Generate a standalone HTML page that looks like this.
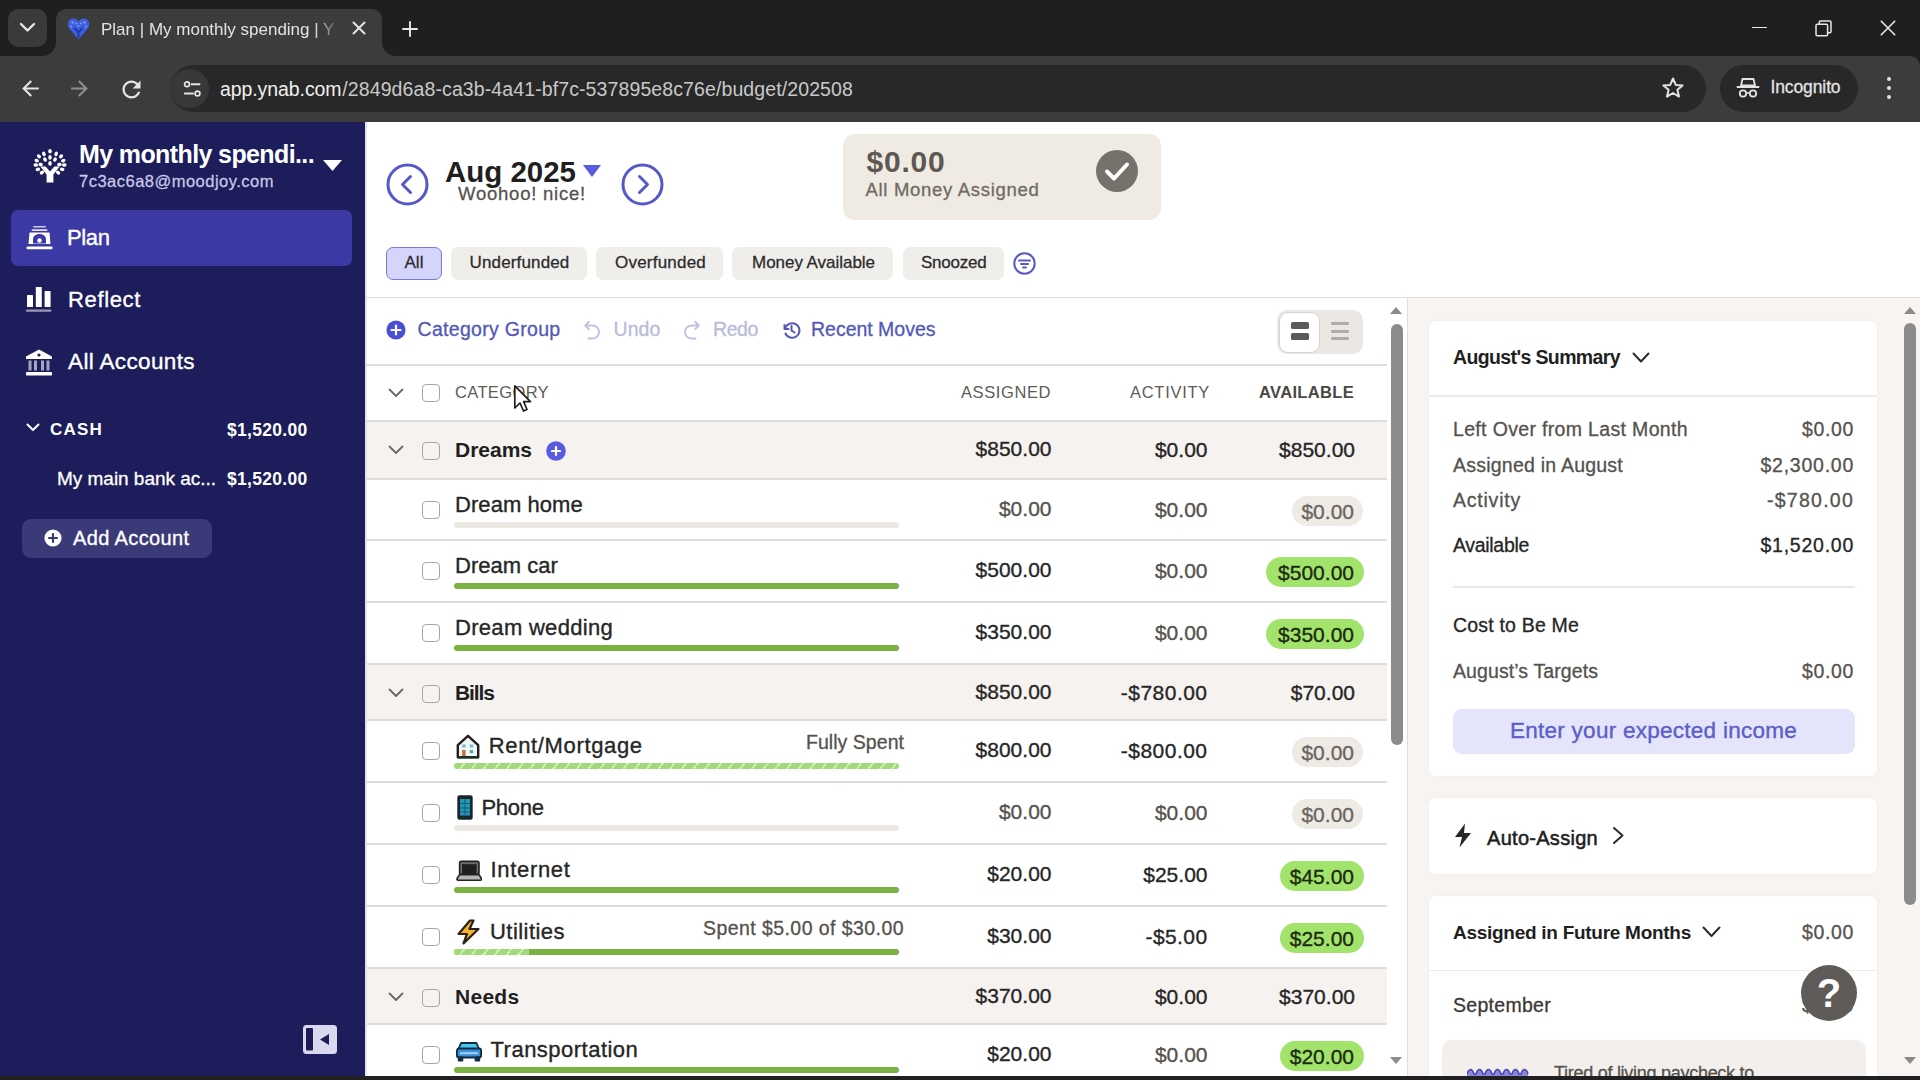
<!DOCTYPE html><html><head><meta charset="utf-8"><title>YNAB Plan</title><style>html,body{margin:0;padding:0;width:1920px;height:1080px;overflow:hidden;background:#1f1f1f;font-family:"Liberation Sans",sans-serif;}</style></head><body><div style="position:absolute;left:0px;top:0px;width:1920px;height:56px;background:#1f1f1f;"></div>
<div style="position:absolute;left:8px;top:9px;width:39px;height:38px;background:#3a3a3a;border-radius:10px"></div>
<svg style="position:absolute;left:19px;top:22px;" width="17" height="11" viewBox="0 0 17 11"><path d="M2 2 L8.5 8.5 L15 2" fill="none" stroke="#e8e8e8" stroke-width="2.4" stroke-linecap="round" stroke-linejoin="round"/></svg>
<div style="position:absolute;left:56px;top:9px;width:326px;height:48px;background:#3c3c3c;border-radius:10px 10px 0 0"></div>
<svg style="position:absolute;left:42px;top:42px;" width="14" height="14" viewBox="0 0 14 14"><path d="M0 14 A14 14 0 0 0 14 0 V14 Z" fill="#3c3c3c"/></svg>
<svg style="position:absolute;left:382px;top:42px;" width="14" height="14" viewBox="0 0 14 14"><path d="M14 14 A14 14 0 0 1 0 0 V14 Z" fill="#3c3c3c"/></svg>
<svg style="position:absolute;left:67px;top:17px;" width="23" height="23" viewBox="0 0 23 23"><path d="M11.5 22.5 L2.2 11.5 C-0.5 8 0.8 2 5.8 1.5 C8.5 1.3 10.5 3 11.5 4.5 C12.5 3 14.5 1.3 17.2 1.5 C22.2 2 23.5 8 20.8 11.5 Z" fill="#3f5ee0"/>
      <g fill="#7f97f5"><circle cx="5.5" cy="5.5" r="1.2"/><circle cx="9" cy="6.5" r="1.1"/><circle cx="14" cy="6.5" r="1.1"/><circle cx="17.5" cy="5.5" r="1.2"/><circle cx="4" cy="9.5" r="1.1"/><circle cx="19" cy="9.5" r="1.1"/><circle cx="11.5" cy="9" r="1.1"/></g>
      <path d="M7.5 11 L11.5 15 L15.5 11 M11.5 15 V21" stroke="#2338a8" stroke-width="2" fill="none"/></svg>
<div id="t1" style="position:absolute;left:101px;top:20.61px;font-size:17px;line-height:17px;font-weight:400;color:#e3e3e3;letter-spacing:0px;white-space:nowrap;font-family:'Liberation Sans', sans-serif;width:240px;overflow:hidden;-webkit-mask-image:linear-gradient(90deg,#000 89%,transparent 100%)">Plan | My monthly spending | Y</div>
<svg style="position:absolute;left:352px;top:21px;" width="14" height="14" viewBox="0 0 14 14"><path d="M1.5 1.5 L12.5 12.5 M12.5 1.5 L1.5 12.5" stroke="#e3e3e3" stroke-width="2" stroke-linecap="round"/></svg>
<svg style="position:absolute;left:402px;top:21px;" width="16" height="16" viewBox="0 0 16 16"><path d="M8 1 V15 M1 8 H15" stroke="#e8e8e8" stroke-width="1.9" stroke-linecap="round"/></svg>
<div style="position:absolute;left:1752px;top:26.5px;width:14.5px;height:1.6px;background:#e8e8e8;"></div>
<svg style="position:absolute;left:1815px;top:20px;" width="17" height="17" viewBox="0 0 17 17"><rect x="1" y="4.2" width="11.6" height="11.6" rx="1.2" fill="none" stroke="#e8e8e8" stroke-width="1.5"/><path d="M4.3 4.2 V2.2 a1.2 1.2 0 0 1 1.2 -1.2 H14.8 a1.2 1.2 0 0 1 1.2 1.2 V11.5 a1.2 1.2 0 0 1 -1.2 1.2 H12.6" fill="none" stroke="#e8e8e8" stroke-width="1.5"/></svg>
<svg style="position:absolute;left:1879px;top:19px;" width="18" height="18" viewBox="0 0 18 18"><path d="M1.8 1.8 L16.2 16.2 M16.2 1.8 L1.8 16.2" stroke="#e8e8e8" stroke-width="1.6"/></svg>
<div style="position:absolute;left:0px;top:56px;width:1920px;height:66px;background:#3c3c3c;border-radius:0 10px 0 0"></div>
<svg style="position:absolute;left:17.8px;top:76px;" width="25" height="25" viewBox="0 0 24 24"><path d="M20 11H7.83l5.59-5.59L12 4l-8 8 8 8 1.41-1.41L7.83 13H20v-2z" fill="#e3e3e3"/></svg>
<svg style="position:absolute;left:67px;top:76px;" width="25" height="25" viewBox="0 0 24 24"><path d="M12 4l-1.41 1.41L16.17 11H4v2h12.17l-5.58 5.59L12 20l8-8z" fill="#8f8f8f"/></svg>
<svg style="position:absolute;left:118px;top:76px;" width="27" height="27" viewBox="0 0 24 24"><path d="M17.65 6.35C16.2 4.9 14.21 4 12 4c-4.42 0-7.99 3.58-7.99 8s3.57 8 7.99 8c3.73 0 6.84-2.55 7.73-6h-2.08c-.82 2.33-3.04 4-5.65 4-3.31 0-6-2.69-6-6s2.69-6 6-6c1.66 0 3.14.69 4.22 1.78L13 11h7V4l-2.35 2.35z" fill="#e3e3e3"/></svg>
<div style="position:absolute;left:170px;top:65px;width:1536px;height:47px;background:#282828;border-radius:24px"></div>
<div style="position:absolute;left:170px;top:69px;width:38.5px;height:38.5px;background:#383838;border-radius:50%"></div>
<svg style="position:absolute;left:183px;top:80px;" width="19" height="18" viewBox="0 0 19 18"><circle cx="4" cy="4.2" r="2.4" fill="none" stroke="#e3e3e3" stroke-width="1.7"/><path d="M8.5 4.2 H16.5" stroke="#e3e3e3" stroke-width="1.9" stroke-linecap="round"/><circle cx="14.5" cy="13.5" r="2.4" fill="none" stroke="#e3e3e3" stroke-width="1.7"/><path d="M1.8 13.5 H10" stroke="#e3e3e3" stroke-width="1.9" stroke-linecap="round"/></svg>
<div id="t2" style="position:absolute;left:220px;top:79.79px;font-size:19.5px;line-height:19.5px;font-weight:400;color:#f0f0f0;letter-spacing:-0.083px;white-space:nowrap;font-family:'Liberation Sans', sans-serif;">app.ynab.com</div>
<div id="t3" style="position:absolute;left:342.3px;top:79.79px;font-size:19.5px;line-height:19.5px;font-weight:400;color:#c8c8c8;letter-spacing:0.106px;white-space:nowrap;font-family:'Liberation Sans', sans-serif;">/2849d6a8-ca3b-4a41-bf7c-537895e8c76e/budget/202508</div>
<svg style="position:absolute;left:1661px;top:76px;" width="24" height="24" viewBox="0 0 24 24"><path d="M12 2.5 L14.8 8.9 L21.6 9.4 L16.4 13.8 L18 20.6 L12 17 L6 20.6 L7.6 13.8 L2.4 9.4 L9.2 8.9 Z" fill="none" stroke="#e3e3e3" stroke-width="2" stroke-linejoin="round"/></svg>
<div style="position:absolute;left:1720px;top:65px;width:138px;height:47px;background:#282828;border-radius:24px"></div>
<svg style="position:absolute;left:1736px;top:77px;" width="24" height="22" viewBox="0 0 24 22"><path d="M6.5 2 H17.5 L19 8.5 H5 Z" fill="none" stroke="#e3e3e3" stroke-width="1.8" stroke-linejoin="round"/><path d="M1.5 10 H22.5" stroke="#e3e3e3" stroke-width="2" stroke-linecap="round"/><circle cx="7" cy="16.5" r="3.2" fill="none" stroke="#e3e3e3" stroke-width="1.8"/><circle cx="17" cy="16.5" r="3.2" fill="none" stroke="#e3e3e3" stroke-width="1.8"/><path d="M10.2 16 H13.8" stroke="#e3e3e3" stroke-width="1.6"/></svg>
<div id="t4" style="position:absolute;left:1770.5px;top:79.19px;font-size:17.5px;line-height:17.5px;font-weight:400;color:#e3e3e3;letter-spacing:-0.115px;white-space:nowrap;font-family:'Liberation Sans', sans-serif;-webkit-text-stroke:0.28px #e3e3e3;">Incognito</div>
<div style="position:absolute;left:1887px;top:76.8px;width:4.4px;height:4.4px;background:#e3e3e3;border-radius:50%"></div>
<div style="position:absolute;left:1887px;top:85.8px;width:4.4px;height:4.4px;background:#e3e3e3;border-radius:50%"></div>
<div style="position:absolute;left:1887px;top:94.8px;width:4.4px;height:4.4px;background:#e3e3e3;border-radius:50%"></div>
<div style="position:absolute;left:0px;top:122px;width:365px;height:958px;background:#1c1d5a;"></div>
<svg style="position:absolute;left:32px;top:148px;" width="36" height="36" viewBox="0 0 36 36"><g fill="#fff"><ellipse cx="18" cy="3.3" rx="1.75" ry="2.3" transform="rotate(0 18 3.3)"/><ellipse cx="11.9" cy="5.9" rx="1.75" ry="2.3" transform="rotate(-25 11.9 5.9)"/><ellipse cx="24.1" cy="5.9" rx="1.75" ry="2.3" transform="rotate(25 24.1 5.9)"/><ellipse cx="6.9" cy="8.3" rx="1.75" ry="2.3" transform="rotate(-46 6.9 8.3)"/><ellipse cx="29.1" cy="8.3" rx="1.75" ry="2.3" transform="rotate(46 29.1 8.3)"/><ellipse cx="4.7" cy="12.6" rx="1.75" ry="2.3" transform="rotate(-64 4.7 12.6)"/><ellipse cx="31.3" cy="12.6" rx="1.75" ry="2.3" transform="rotate(64 31.3 12.6)"/><ellipse cx="3.8" cy="17" rx="1.75" ry="2.3" transform="rotate(-82 3.8 17)"/><ellipse cx="32.2" cy="17" rx="1.75" ry="2.3" transform="rotate(82 32.2 17)"/><ellipse cx="5.8" cy="21.4" rx="1.75" ry="2.3" transform="rotate(259 5.8 21.4)"/><ellipse cx="30.2" cy="21.4" rx="1.75" ry="2.3" transform="rotate(101 30.2 21.4)"/><ellipse cx="9.9" cy="24.6" rx="1.75" ry="2.3" transform="rotate(235 9.9 24.6)"/><ellipse cx="26.1" cy="24.6" rx="1.75" ry="2.3" transform="rotate(125 26.1 24.6)"/><ellipse cx="13" cy="11.6" rx="1.75" ry="2.3" transform="rotate(-34 13 11.6)"/><ellipse cx="23" cy="11.6" rx="1.75" ry="2.3" transform="rotate(34 23 11.6)"/><ellipse cx="18" cy="9.4" rx="1.75" ry="2.3" transform="rotate(0 18 9.4)"/><ellipse cx="18" cy="15.4" rx="1.75" ry="2.3" transform="rotate(0 18 15.4)"/><ellipse cx="8.6" cy="16.5" rx="1.75" ry="2.3" transform="rotate(-75 8.6 16.5)"/><ellipse cx="27.4" cy="16.5" rx="1.75" ry="2.3" transform="rotate(75 27.4 16.5)"/><path d="M8.3 18.5 H13.6 L18 23.6 L22.4 18.5 H27.7 L21.4 26.5 V34.5 H14.6 V26.5 Z"/></g></svg>
<div id="t5" style="position:absolute;left:79px;top:142.34px;font-size:25px;line-height:25px;font-weight:700;color:#ffffff;letter-spacing:-0.613px;white-space:nowrap;font-family:'Liberation Sans', sans-serif;">My monthly spendi...</div>
<svg style="position:absolute;left:323px;top:160px;" width="19" height="12" viewBox="0 0 19 12"><path d="M0 0 H19 L9.5 11 Z" fill="#fff"/></svg>
<div id="t6" style="position:absolute;left:79px;top:172.53px;font-size:16.5px;line-height:16.5px;font-weight:400;color:#c9c8e6;letter-spacing:0.489px;white-space:nowrap;font-family:'Liberation Sans', sans-serif;-webkit-text-stroke:0.26px #c9c8e6;">7c3ac6a8@moodjoy.com</div>
<div style="position:absolute;left:11px;top:210px;width:341px;height:55.5px;background:#3b39a3;border-radius:7px"></div>
<svg style="position:absolute;left:26px;top:225px;" width="27" height="26" viewBox="0 0 27 26"><g fill="#fff">
      <rect x="7" y="1" width="13" height="1.6" rx=".8" opacity=".75"/>
      <rect x="5.5" y="4.2" width="16" height="1.8" rx=".9" opacity=".85"/>
      <path d="M3.5 7.5 H23.5 L24.5 19 H2.5 Z"/>
      <rect x="0.5" y="21.5" width="26" height="2.8" rx="1"/></g>
      <path d="M7 18.5 V14 a6.5 5 0 0 1 13 0 V18.5 Z" fill="#3b38a6"/>
      <circle cx="13.5" cy="15.5" r="2.2" fill="#fff"/></svg>
<div id="t7" style="position:absolute;left:67px;top:226.68px;font-size:22px;line-height:22px;font-weight:400;color:#ffffff;letter-spacing:-0.387px;white-space:nowrap;font-family:'Liberation Sans', sans-serif;-webkit-text-stroke:0.35px #ffffff;">Plan</div>
<svg style="position:absolute;left:26px;top:286px;" width="26" height="26" viewBox="0 0 26 26"><g fill="#fff"><rect x="1" y="9" width="6" height="12" rx=".6"/><rect x="9.8" y="1" width="6" height="20" rx=".6"/><rect x="18.6" y="5" width="6" height="16" rx=".6"/>
      <rect x="0" y="23.6" width="25.5" height="2.2" rx="1" opacity=".55"/></g></svg>
<div id="t8" style="position:absolute;left:68px;top:288.68px;font-size:22px;line-height:22px;font-weight:400;color:#ffffff;letter-spacing:0.645px;white-space:nowrap;font-family:'Liberation Sans', sans-serif;-webkit-text-stroke:0.35px #ffffff;">Reflect</div>
<svg style="position:absolute;left:25px;top:349px;" width="28" height="27" viewBox="0 0 28 27"><g fill="#fff"><path d="M14 0.5 L27 7.5 V10 H1 V7.5 Z"/><g opacity=".6"><rect x="3.5" y="11.5" width="3" height="10"/><rect x="9" y="11.5" width="3" height="10"/><rect x="16" y="11.5" width="3" height="10"/><rect x="21.5" y="11.5" width="3" height="10"/></g>
      <rect x="1" y="23" width="26" height="3.5" rx=".8"/></g><circle cx="14" cy="6" r="1.6" fill="#1d1c59"/></svg>
<div id="t9" style="position:absolute;left:68px;top:350.95px;font-size:22.5px;line-height:22.5px;font-weight:400;color:#ffffff;letter-spacing:0.368px;white-space:nowrap;font-family:'Liberation Sans', sans-serif;-webkit-text-stroke:0.36px #ffffff;">All Accounts</div>
<svg style="position:absolute;left:26px;top:423px;" width="14" height="9" viewBox="0 0 14 9"><path d="M1.5 1.5 L7 7 L12.5 1.5" fill="none" stroke="#fff" stroke-width="2" stroke-linecap="round" stroke-linejoin="round"/></svg>
<div id="t10" style="position:absolute;left:50px;top:420.61px;font-size:17px;line-height:17px;font-weight:700;color:#ffffff;letter-spacing:1.207px;white-space:nowrap;font-family:'Liberation Sans', sans-serif;">CASH</div>
<div id="t11" style="position:absolute;right:1612.5px;top:421.69px;font-size:17.5px;line-height:17.5px;font-weight:700;color:#ffffff;letter-spacing:0.293px;white-space:nowrap;font-family:'Liberation Sans', sans-serif;">$1,520.00</div>
<div id="t12" style="position:absolute;left:57px;top:468.92px;font-size:19px;line-height:19px;font-weight:400;color:#ffffff;letter-spacing:-0.025px;white-space:nowrap;font-family:'Liberation Sans', sans-serif;-webkit-text-stroke:0.30px #ffffff;">My main bank ac...</div>
<div id="t13" style="position:absolute;right:1612.5px;top:470.69px;font-size:17.5px;line-height:17.5px;font-weight:700;color:#ffffff;letter-spacing:0.293px;white-space:nowrap;font-family:'Liberation Sans', sans-serif;">$1,520.00</div>
<div style="position:absolute;left:22px;top:519px;width:190px;height:39px;background:#3b3a78;border-radius:9px"></div>
<svg style="position:absolute;left:44px;top:529px;" width="18" height="18" viewBox="0 0 18 18"><circle cx="9" cy="9" r="8.6" fill="#fff"/><path d="M9 5 V13 M5 9 H13" stroke="#3b3a78" stroke-width="2.2" stroke-linecap="round"/></svg>
<div id="t14" style="position:absolute;left:73px;top:528.07px;font-size:20px;line-height:20px;font-weight:400;color:#ffffff;letter-spacing:0.381px;white-space:nowrap;font-family:'Liberation Sans', sans-serif;-webkit-text-stroke:0.32px #ffffff;">Add Account</div>
<svg style="position:absolute;left:303px;top:1025px;" width="34" height="29" viewBox="0 0 34 29"><rect x="0" y="0" width="34" height="29" rx="3.5" fill="#d9d8ee"/><rect x="3" y="3" width="7" height="22.5" rx="1" fill="#1d1c59"/><path d="M26 9 L17 14.5 L26 20 Z" fill="#1d1c59"/></svg>
<div style="position:absolute;left:365px;top:122px;width:1555px;height:954px;background:#ffffff;"></div>
<div style="position:absolute;left:365px;top:122px;width:1.5px;height:954px;background:#e4e2f3;"></div>
<svg style="position:absolute;left:386px;top:163px;" width="43" height="43" viewBox="0 0 43 43"><circle cx="21.5" cy="21.5" r="19.5" fill="none" stroke="#5558c9" stroke-width="3"/><path d="M24.5 13.5 L16.5 21.5 L24.5 29.5" fill="none" stroke="#5558c9" stroke-width="3" stroke-linecap="round" stroke-linejoin="round"/></svg>
<svg style="position:absolute;left:621px;top:163px;" width="43" height="43" viewBox="0 0 43 43"><circle cx="21.5" cy="21.5" r="19.5" fill="none" stroke="#5558c9" stroke-width="3"/><path d="M18.5 13.5 L26.5 21.5 L18.5 29.5" fill="none" stroke="#5558c9" stroke-width="3" stroke-linecap="round" stroke-linejoin="round"/></svg>
<div id="t15" style="position:absolute;left:445px;top:156.53px;font-size:29.5px;line-height:29.5px;font-weight:700;color:#1f1f1f;letter-spacing:-0.021px;white-space:nowrap;font-family:'Liberation Sans', sans-serif;">Aug 2025</div>
<svg style="position:absolute;left:583px;top:165px;" width="18" height="12" viewBox="0 0 18 12"><path d="M0 0 H18 L9 12 Z" fill="#5b5be0"/></svg>
<div id="t16" style="position:absolute;left:458px;top:185.34px;font-size:18.5px;line-height:18.5px;font-weight:400;color:#55524f;letter-spacing:0.774px;white-space:nowrap;font-family:'Liberation Sans', sans-serif;-webkit-text-stroke:0.30px #55524f;">Woohoo! nice!</div>
<div style="position:absolute;left:843px;top:134px;width:318px;height:86px;background:#efeae2;border-radius:12px"></div>
<div id="t17" style="position:absolute;left:866.5px;top:147.10px;font-size:30px;line-height:30px;font-weight:700;color:#5e5852;letter-spacing:0.784px;white-space:nowrap;font-family:'Liberation Sans', sans-serif;">$0.00</div>
<div id="t18" style="position:absolute;left:865.5px;top:180.84px;font-size:18.5px;line-height:18.5px;font-weight:400;color:#6f6a64;letter-spacing:0.697px;white-space:nowrap;font-family:'Liberation Sans', sans-serif;-webkit-text-stroke:0.30px #6f6a64;">All Money Assigned</div>
<svg style="position:absolute;left:1096px;top:150px;" width="42" height="42" viewBox="0 0 42 42"><circle cx="21" cy="21" r="21" fill="#77716b"/><path d="M11 21.5 L18 28.5 L31 14.5" fill="none" stroke="#fff" stroke-width="4" stroke-linecap="round" stroke-linejoin="round"/></svg>
<div style="position:absolute;left:386px;top:247px;width:56px;height:33px;background:#d5d5fb;border:1.5px solid #7a7ad8;border-radius:7px;box-sizing:border-box"></div>
<div style="position:absolute;left:451px;top:247px;width:136px;height:33px;background:#f0eeeb;border-radius:7px"></div>
<div style="position:absolute;left:596px;top:247px;width:127px;height:33px;background:#f0eeeb;border-radius:7px"></div>
<div style="position:absolute;left:732px;top:247px;width:161px;height:33px;background:#f0eeeb;border-radius:7px"></div>
<div style="position:absolute;left:903px;top:247px;width:101px;height:33px;background:#f0eeeb;border-radius:7px"></div>
<div id="t19" style="position:absolute;left:404.5px;top:254.11px;font-size:17px;line-height:17px;font-weight:400;color:#2b2b2b;letter-spacing:0.031px;white-space:nowrap;font-family:'Liberation Sans', sans-serif;-webkit-text-stroke:0.27px #2b2b2b;">All</div>
<div id="t20" style="position:absolute;left:469.5px;top:254.11px;font-size:17px;line-height:17px;font-weight:400;color:#2b2b2b;letter-spacing:0.153px;white-space:nowrap;font-family:'Liberation Sans', sans-serif;-webkit-text-stroke:0.27px #2b2b2b;">Underfunded</div>
<div id="t21" style="position:absolute;left:615px;top:254.11px;font-size:17px;line-height:17px;font-weight:400;color:#2b2b2b;letter-spacing:0.216px;white-space:nowrap;font-family:'Liberation Sans', sans-serif;-webkit-text-stroke:0.27px #2b2b2b;">Overfunded</div>
<div id="t22" style="position:absolute;left:752px;top:254.11px;font-size:17px;line-height:17px;font-weight:400;color:#2b2b2b;letter-spacing:-0.033px;white-space:nowrap;font-family:'Liberation Sans', sans-serif;-webkit-text-stroke:0.27px #2b2b2b;">Money Available</div>
<div id="t23" style="position:absolute;left:921px;top:254.11px;font-size:17px;line-height:17px;font-weight:400;color:#2b2b2b;letter-spacing:-0.232px;white-space:nowrap;font-family:'Liberation Sans', sans-serif;-webkit-text-stroke:0.27px #2b2b2b;">Snoozed</div>
<svg style="position:absolute;left:1013px;top:252px;" width="23" height="23" viewBox="0 0 23 23"><circle cx="11.5" cy="11.5" r="10.2" fill="none" stroke="#5558c9" stroke-width="2"/><path d="M6 8.5 H17 M8 12 H15 M10 15.5 H13" stroke="#5558c9" stroke-width="2" stroke-linecap="round"/></svg>
<div style="position:absolute;left:365px;top:296.5px;width:1555px;height:1.5px;background:#dfdddb;"></div>
<svg style="position:absolute;left:386px;top:320px;" width="20" height="20" viewBox="0 0 20 20"><circle cx="10" cy="10" r="9.6" fill="#4b4fd6"/><path d="M10 5.5 V14.5 M5.5 10 H14.5" stroke="#fff" stroke-width="2.2" stroke-linecap="round"/></svg>
<div id="t24" style="position:absolute;left:417.5px;top:319.99px;font-size:19.5px;line-height:19.5px;font-weight:400;color:#5358b8;letter-spacing:0.304px;white-space:nowrap;font-family:'Liberation Sans', sans-serif;-webkit-text-stroke:0.31px #5358b8;">Category Group</div>
<svg style="position:absolute;left:582px;top:319px;" width="20" height="22" viewBox="0 0 20 22"><path d="M3.2 6.5 H10.5 A6.5 6.5 0 0 1 10.5 19.5 H6.5 M6.8 2.9 L3.2 6.5 L6.8 10.1" fill="none" stroke="#bfc2e0" stroke-width="2" stroke-linecap="round" stroke-linejoin="round"/></svg>
<div id="t25" style="position:absolute;left:613.5px;top:319.99px;font-size:19.5px;line-height:19.5px;font-weight:400;color:#b9bbdc;letter-spacing:0.094px;white-space:nowrap;font-family:'Liberation Sans', sans-serif;-webkit-text-stroke:0.31px #b9bbdc;">Undo</div>
<svg style="position:absolute;left:682px;top:319px;" width="20" height="22" viewBox="0 0 20 22"><path d="M16.8 6.5 H9.5 A6.5 6.5 0 0 0 9.5 19.5 H13.5 M13.2 2.9 L16.8 6.5 L13.2 10.1" fill="none" stroke="#bfc2e0" stroke-width="2" stroke-linecap="round" stroke-linejoin="round"/></svg>
<div id="t26" style="position:absolute;left:713px;top:319.99px;font-size:19.5px;line-height:19.5px;font-weight:400;color:#b9bbdc;letter-spacing:-0.406px;white-space:nowrap;font-family:'Liberation Sans', sans-serif;-webkit-text-stroke:0.31px #b9bbdc;">Redo</div>
<svg style="position:absolute;left:781px;top:320px;" width="20" height="20" viewBox="0 0 20 20"><path d="M3.5 5 V9 H7.5" fill="none" stroke="#5358b8" stroke-width="2" stroke-linecap="round" stroke-linejoin="round"/><path d="M4 9 A7.3 7.3 0 1 1 4.5 13.5" fill="none" stroke="#5358b8" stroke-width="2" stroke-linecap="round"/><path d="M10.5 6 V10.5 L13.5 12.5" fill="none" stroke="#5358b8" stroke-width="2" stroke-linecap="round"/></svg>
<div id="t27" style="position:absolute;left:811px;top:319.99px;font-size:19.5px;line-height:19.5px;font-weight:400;color:#5358b8;letter-spacing:-0.012px;white-space:nowrap;font-family:'Liberation Sans', sans-serif;-webkit-text-stroke:0.31px #5358b8;">Recent Moves</div>
<div style="position:absolute;left:1277px;top:310px;width:86px;height:44px;background:#ebe7e2;border-radius:10px"></div>
<div style="position:absolute;left:1278.5px;top:311.5px;width:41.5px;height:41px;background:#ffffff;border:1.5px solid #d6d2cd;border-radius:9px;box-sizing:border-box"></div>
<div style="position:absolute;left:1290.5px;top:322px;width:18px;height:7px;background:#5d5b59;border-radius:1.5px"></div>
<div style="position:absolute;left:1290.5px;top:333px;width:18px;height:7px;background:#5d5b59;border-radius:1.5px"></div>
<div style="position:absolute;left:1331px;top:322px;width:18px;height:3.3px;background:#b1aca7;border-radius:1px"></div>
<div style="position:absolute;left:1331px;top:329.5px;width:18px;height:3.3px;background:#b1aca7;border-radius:1px"></div>
<div style="position:absolute;left:1331px;top:337px;width:18px;height:3.3px;background:#b1aca7;border-radius:1px"></div>
<div style="position:absolute;left:365px;top:364px;width:1022px;height:1.5px;background:#dfdddb;"></div>
<svg style="position:absolute;left:388px;top:388px;" width="16" height="10" viewBox="0 0 16 10"><path d="M1.5 1.5 L8 8 L14.5 1.5" fill="none" stroke="#6b6763" stroke-width="1.8" stroke-linecap="round" stroke-linejoin="round"/></svg>
<div style="position:absolute;left:422px;top:384px;width:18px;height:18px;background:transparent;border:1.7px solid #a8a6a4;border-radius:4px;box-sizing:border-box"></div>
<div id="t28" style="position:absolute;left:455px;top:384.03px;font-size:16.5px;line-height:16.5px;font-weight:400;color:#5f5b57;letter-spacing:0.365px;white-space:nowrap;font-family:'Liberation Sans', sans-serif;">CATEGORY</div>
<div id="t29" style="position:absolute;right:869px;top:384.33px;font-size:16.5px;line-height:16.5px;font-weight:400;color:#5f5b57;letter-spacing:0.590px;white-space:nowrap;font-family:'Liberation Sans', sans-serif;">ASSIGNED</div>
<div id="t30" style="position:absolute;right:710px;top:384.33px;font-size:16.5px;line-height:16.5px;font-weight:400;color:#5f5b57;letter-spacing:0.717px;white-space:nowrap;font-family:'Liberation Sans', sans-serif;">ACTIVITY</div>
<div id="t31" style="position:absolute;right:566px;top:384.33px;font-size:16.5px;line-height:16.5px;font-weight:700;color:#4b4744;letter-spacing:0.337px;white-space:nowrap;font-family:'Liberation Sans', sans-serif;">AVAILABLE</div>
<div style="position:absolute;left:366.5px;top:420.25px;width:1020.5px;height:1.5px;background:#dfdddb;"></div>
<div style="position:absolute;left:366.5px;top:421.75px;width:1020.5px;height:57.25px;background:#f6f2ef;"></div>
<svg style="position:absolute;left:388px;top:445px;" width="16" height="10" viewBox="0 0 16 10"><path d="M1.5 1.5 L8 8 L14.5 1.5" fill="none" stroke="#6b6763" stroke-width="1.8" stroke-linecap="round" stroke-linejoin="round"/></svg>
<div style="position:absolute;left:422px;top:442px;width:18px;height:18px;background:transparent;border:1.7px solid #a8a6a4;border-radius:4px;box-sizing:border-box"></div>
<div id="t32" style="position:absolute;left:455px;top:438.52px;font-size:21px;line-height:21px;font-weight:700;color:#1f1f1f;letter-spacing:-0.010px;white-space:nowrap;font-family:'Liberation Sans', sans-serif;">Dreams</div>
<svg style="position:absolute;left:545.5px;top:440.5px;" width="20" height="20" viewBox="0 0 20 20"><circle cx="10" cy="10" r="9.8" fill="#5a5ce0"/><path d="M10 6 V14 M6 10 H14" stroke="#fff" stroke-width="2.2" stroke-linecap="round"/></svg>
<div id="t33" style="position:absolute;right:868.5px;top:438.22px;font-size:21px;line-height:21px;font-weight:400;color:#262626;letter-spacing:0px;white-space:nowrap;font-family:'Liberation Sans', sans-serif;-webkit-text-stroke:0.34px #262626;">$850.00</div>
<div id="t34" style="position:absolute;right:712.5px;top:438.72px;font-size:21px;line-height:21px;font-weight:400;color:#262626;letter-spacing:0px;white-space:nowrap;font-family:'Liberation Sans', sans-serif;-webkit-text-stroke:0.34px #262626;">$0.00</div>
<div id="t35" style="position:absolute;right:565px;top:438.72px;font-size:21px;line-height:21px;font-weight:400;color:#262626;letter-spacing:0px;white-space:nowrap;font-family:'Liberation Sans', sans-serif;-webkit-text-stroke:0.34px #262626;">$850.00</div>
<div style="position:absolute;left:366.5px;top:478.25px;width:1020.5px;height:1.5px;background:#dfdddb;"></div>
<div style="position:absolute;left:422px;top:501px;width:18px;height:18px;background:transparent;border:1.7px solid #a8a6a4;border-radius:4px;box-sizing:border-box"></div>
<div id="t36" style="position:absolute;left:455px;top:493.88px;font-size:22px;line-height:22px;font-weight:400;color:#262626;letter-spacing:0.064px;white-space:nowrap;font-family:'Liberation Sans', sans-serif;-webkit-text-stroke:0.35px #262626;">Dream home</div>
<div style="position:absolute;left:454px;top:522px;width:444.5px;height:6px;background:#ece8e2;border-radius:3px"></div>
<div id="t37" style="position:absolute;right:868.5px;top:497.72px;font-size:21px;line-height:21px;font-weight:400;color:#55524f;letter-spacing:0px;white-space:nowrap;font-family:'Liberation Sans', sans-serif;-webkit-text-stroke:0.34px #55524f;">$0.00</div>
<div id="t38" style="position:absolute;right:712.5px;top:498.72px;font-size:21px;line-height:21px;font-weight:400;color:#55524f;letter-spacing:0px;white-space:nowrap;font-family:'Liberation Sans', sans-serif;-webkit-text-stroke:0.34px #55524f;">$0.00</div>
<div style="position:absolute;left:1292px;top:496px;width:70.5px;height:29.5px;background:#eeeae4;border-radius:15px"></div>
<div id="t39" style="position:absolute;right:566px;top:500.72px;font-size:21px;line-height:21px;font-weight:400;color:#6a6661;letter-spacing:0px;white-space:nowrap;font-family:'Liberation Sans', sans-serif;-webkit-text-stroke:0.34px #6a6661;">$0.00</div>
<div style="position:absolute;left:366.5px;top:539.25px;width:1020.5px;height:1.5px;background:#dfdddb;"></div>
<div style="position:absolute;left:422px;top:562px;width:18px;height:18px;background:transparent;border:1.7px solid #a8a6a4;border-radius:4px;box-sizing:border-box"></div>
<div id="t40" style="position:absolute;left:455px;top:554.88px;font-size:22px;line-height:22px;font-weight:400;color:#262626;letter-spacing:0.012px;white-space:nowrap;font-family:'Liberation Sans', sans-serif;-webkit-text-stroke:0.35px #262626;">Dream car</div>
<div style="position:absolute;left:454px;top:583px;width:444.5px;height:6px;background:#7bb043;border-radius:3px"></div>
<div id="t41" style="position:absolute;right:868.5px;top:558.72px;font-size:21px;line-height:21px;font-weight:400;color:#262626;letter-spacing:0px;white-space:nowrap;font-family:'Liberation Sans', sans-serif;-webkit-text-stroke:0.34px #262626;">$500.00</div>
<div id="t42" style="position:absolute;right:712.5px;top:559.72px;font-size:21px;line-height:21px;font-weight:400;color:#55524f;letter-spacing:0px;white-space:nowrap;font-family:'Liberation Sans', sans-serif;-webkit-text-stroke:0.34px #55524f;">$0.00</div>
<div style="position:absolute;left:1266.0px;top:556.8px;width:97.5px;height:30.6px;background:#a2e36b;border-radius:16px"></div>
<div id="t43" style="position:absolute;right:566px;top:561.72px;font-size:21px;line-height:21px;font-weight:400;color:#1b2a12;letter-spacing:0px;white-space:nowrap;font-family:'Liberation Sans', sans-serif;-webkit-text-stroke:0.34px #1b2a12;">$500.00</div>
<div style="position:absolute;left:366.5px;top:601.25px;width:1020.5px;height:1.5px;background:#dfdddb;"></div>
<div style="position:absolute;left:422px;top:624px;width:18px;height:18px;background:transparent;border:1.7px solid #a8a6a4;border-radius:4px;box-sizing:border-box"></div>
<div id="t44" style="position:absolute;left:455px;top:616.88px;font-size:22px;line-height:22px;font-weight:400;color:#262626;letter-spacing:0.302px;white-space:nowrap;font-family:'Liberation Sans', sans-serif;-webkit-text-stroke:0.35px #262626;">Dream wedding</div>
<div style="position:absolute;left:454px;top:645px;width:444.5px;height:6px;background:#7bb043;border-radius:3px"></div>
<div id="t45" style="position:absolute;right:868.5px;top:620.72px;font-size:21px;line-height:21px;font-weight:400;color:#262626;letter-spacing:0px;white-space:nowrap;font-family:'Liberation Sans', sans-serif;-webkit-text-stroke:0.34px #262626;">$350.00</div>
<div id="t46" style="position:absolute;right:712.5px;top:621.72px;font-size:21px;line-height:21px;font-weight:400;color:#55524f;letter-spacing:0px;white-space:nowrap;font-family:'Liberation Sans', sans-serif;-webkit-text-stroke:0.34px #55524f;">$0.00</div>
<div style="position:absolute;left:1266.0px;top:618.8px;width:97.5px;height:30.6px;background:#a2e36b;border-radius:16px"></div>
<div id="t47" style="position:absolute;right:566px;top:623.72px;font-size:21px;line-height:21px;font-weight:400;color:#1b2a12;letter-spacing:0px;white-space:nowrap;font-family:'Liberation Sans', sans-serif;-webkit-text-stroke:0.34px #1b2a12;">$350.00</div>
<div style="position:absolute;left:366.5px;top:663.25px;width:1020.5px;height:1.5px;background:#dfdddb;"></div>
<div style="position:absolute;left:366.5px;top:664.75px;width:1020.5px;height:55.25px;background:#f6f2ef;"></div>
<svg style="position:absolute;left:388px;top:688px;" width="16" height="10" viewBox="0 0 16 10"><path d="M1.5 1.5 L8 8 L14.5 1.5" fill="none" stroke="#6b6763" stroke-width="1.8" stroke-linecap="round" stroke-linejoin="round"/></svg>
<div style="position:absolute;left:422px;top:685px;width:18px;height:18px;background:transparent;border:1.7px solid #a8a6a4;border-radius:4px;box-sizing:border-box"></div>
<div id="t48" style="position:absolute;left:455px;top:681.52px;font-size:21px;line-height:21px;font-weight:700;color:#1f1f1f;letter-spacing:-1.132px;white-space:nowrap;font-family:'Liberation Sans', sans-serif;">Bills</div>
<div id="t49" style="position:absolute;right:868.5px;top:681.22px;font-size:21px;line-height:21px;font-weight:400;color:#262626;letter-spacing:0px;white-space:nowrap;font-family:'Liberation Sans', sans-serif;-webkit-text-stroke:0.34px #262626;">$850.00</div>
<div id="t50" style="position:absolute;right:712.5px;top:681.72px;font-size:21px;line-height:21px;font-weight:400;color:#262626;letter-spacing:0.474px;white-space:nowrap;font-family:'Liberation Sans', sans-serif;-webkit-text-stroke:0.34px #262626;">-$780.00</div>
<div id="t51" style="position:absolute;right:565px;top:681.72px;font-size:21px;line-height:21px;font-weight:400;color:#262626;letter-spacing:0px;white-space:nowrap;font-family:'Liberation Sans', sans-serif;-webkit-text-stroke:0.34px #262626;">$70.00</div>
<div style="position:absolute;left:366.5px;top:719.25px;width:1020.5px;height:1.5px;background:#dfdddb;"></div>
<div style="position:absolute;left:422px;top:742px;width:18px;height:18px;background:transparent;border:1.7px solid #a8a6a4;border-radius:4px;box-sizing:border-box"></div>
<svg style="position:absolute;left:456px;top:733.5px;" width="24" height="25" viewBox="0 0 24 25"><path d="M12 1.8 L1.8 11.2 V23.2 H22.2 V11.2 Z" fill="#eef8fb" stroke="#2a1c18" stroke-width="2.4" stroke-linejoin="round"/>
        <rect x="6.2" y="10.5" width="3.4" height="3" fill="#7fb4cf"/><rect x="13.8" y="10.5" width="3.4" height="3" fill="#7fb4cf"/>
        <rect x="6.2" y="16" width="3.4" height="6.5" fill="#d0672f"/><rect x="13.8" y="16" width="3.4" height="3.2" fill="#57a89a"/>
        <path d="M1.8 23.2 H22.2" stroke="#17331f" stroke-width="2.4"/></svg>
<div id="t52" style="position:absolute;left:488.75px;top:734.88px;font-size:22px;line-height:22px;font-weight:400;color:#262626;letter-spacing:0.651px;white-space:nowrap;font-family:'Liberation Sans', sans-serif;-webkit-text-stroke:0.35px #262626;">Rent/Mortgage</div>
<div id="t53" style="position:absolute;right:1016px;top:732.99px;font-size:19.5px;line-height:19.5px;font-weight:400;color:#55524f;letter-spacing:0.040px;white-space:nowrap;font-family:'Liberation Sans', sans-serif;-webkit-text-stroke:0.31px #55524f;">Fully Spent</div>
<div style="position:absolute;left:454px;top:763px;width:444.5px;height:6px;background:repeating-linear-gradient(128deg,#a3d97a 0 7.4px,#cdf0b0 7.4px 9.2px);border-radius:3px"></div>
<div id="t54" style="position:absolute;right:868.5px;top:738.72px;font-size:21px;line-height:21px;font-weight:400;color:#262626;letter-spacing:0px;white-space:nowrap;font-family:'Liberation Sans', sans-serif;-webkit-text-stroke:0.34px #262626;">$800.00</div>
<div id="t55" style="position:absolute;right:712.5px;top:739.72px;font-size:21px;line-height:21px;font-weight:400;color:#262626;letter-spacing:0.474px;white-space:nowrap;font-family:'Liberation Sans', sans-serif;-webkit-text-stroke:0.34px #262626;">-$800.00</div>
<div style="position:absolute;left:1292px;top:737px;width:70.5px;height:29.5px;background:#eeeae4;border-radius:15px"></div>
<div id="t56" style="position:absolute;right:566px;top:741.72px;font-size:21px;line-height:21px;font-weight:400;color:#6a6661;letter-spacing:0px;white-space:nowrap;font-family:'Liberation Sans', sans-serif;-webkit-text-stroke:0.34px #6a6661;">$0.00</div>
<div style="position:absolute;left:366.5px;top:781.25px;width:1020.5px;height:1.5px;background:#dfdddb;"></div>
<div style="position:absolute;left:422px;top:804px;width:18px;height:18px;background:transparent;border:1.7px solid #a8a6a4;border-radius:4px;box-sizing:border-box"></div>
<svg style="position:absolute;left:456.5px;top:794.8px;" width="16" height="25" viewBox="0 0 16 25"><rect x="0.3" y="0.3" width="15.4" height="24.4" rx="2.2" fill="#1c2529"/><rect x="3" y="4" width="10" height="16.5" fill="#2596bb"/><path d="M3 8.5 H13 M3 13 H13 M3 17 H13 M8 4 V20.5" stroke="#0e5f7a" stroke-width="1"/></svg>
<div id="t57" style="position:absolute;left:481.4px;top:796.88px;font-size:22px;line-height:22px;font-weight:400;color:#262626;letter-spacing:-0.265px;white-space:nowrap;font-family:'Liberation Sans', sans-serif;-webkit-text-stroke:0.35px #262626;">Phone</div>
<div style="position:absolute;left:454px;top:825px;width:444.5px;height:6px;background:#ece8e2;border-radius:3px"></div>
<div id="t58" style="position:absolute;right:868.5px;top:800.72px;font-size:21px;line-height:21px;font-weight:400;color:#55524f;letter-spacing:0px;white-space:nowrap;font-family:'Liberation Sans', sans-serif;-webkit-text-stroke:0.34px #55524f;">$0.00</div>
<div id="t59" style="position:absolute;right:712.5px;top:801.72px;font-size:21px;line-height:21px;font-weight:400;color:#55524f;letter-spacing:0px;white-space:nowrap;font-family:'Liberation Sans', sans-serif;-webkit-text-stroke:0.34px #55524f;">$0.00</div>
<div style="position:absolute;left:1292px;top:799px;width:70.5px;height:29.5px;background:#eeeae4;border-radius:15px"></div>
<div id="t60" style="position:absolute;right:566px;top:803.72px;font-size:21px;line-height:21px;font-weight:400;color:#6a6661;letter-spacing:0px;white-space:nowrap;font-family:'Liberation Sans', sans-serif;-webkit-text-stroke:0.34px #6a6661;">$0.00</div>
<div style="position:absolute;left:366.5px;top:843.25px;width:1020.5px;height:1.5px;background:#dfdddb;"></div>
<div style="position:absolute;left:422px;top:866px;width:18px;height:18px;background:transparent;border:1.7px solid #a8a6a4;border-radius:4px;box-sizing:border-box"></div>
<svg style="position:absolute;left:456px;top:859.5px;" width="26" height="21" viewBox="0 0 26 21"><rect x="3.6" y="1.4" width="19.4" height="13" rx="1.8" fill="#6e6e6e" stroke="#222" stroke-width="1.6"/><rect x="6" y="4.2" width="14.6" height="9.8" fill="#1f1f1f"/><path d="M3.5 14.8 H23 L25.4 18.4 Q26 20.2 24.2 20.2 H2.3 Q0.5 20.2 1.1 18.4 Z" fill="#b5b5b5" stroke="#222" stroke-width="1.6" stroke-linejoin="round"/></svg>
<div id="t61" style="position:absolute;left:490.5px;top:858.88px;font-size:22px;line-height:22px;font-weight:400;color:#262626;letter-spacing:0.674px;white-space:nowrap;font-family:'Liberation Sans', sans-serif;-webkit-text-stroke:0.35px #262626;">Internet</div>
<div style="position:absolute;left:454px;top:887px;width:444.5px;height:6px;background:#7bb043;border-radius:3px"></div>
<div id="t62" style="position:absolute;right:868.5px;top:862.72px;font-size:21px;line-height:21px;font-weight:400;color:#262626;letter-spacing:0px;white-space:nowrap;font-family:'Liberation Sans', sans-serif;-webkit-text-stroke:0.34px #262626;">$20.00</div>
<div id="t63" style="position:absolute;right:712.5px;top:863.72px;font-size:21px;line-height:21px;font-weight:400;color:#262626;letter-spacing:0px;white-space:nowrap;font-family:'Liberation Sans', sans-serif;-webkit-text-stroke:0.34px #262626;">$25.00</div>
<div style="position:absolute;left:1280.0px;top:860.8px;width:83.5px;height:30.6px;background:#a2e36b;border-radius:16px"></div>
<div id="t64" style="position:absolute;right:566px;top:865.72px;font-size:21px;line-height:21px;font-weight:400;color:#1b2a12;letter-spacing:0px;white-space:nowrap;font-family:'Liberation Sans', sans-serif;-webkit-text-stroke:0.34px #1b2a12;">$45.00</div>
<div style="position:absolute;left:366.5px;top:905.25px;width:1020.5px;height:1.5px;background:#dfdddb;"></div>
<div style="position:absolute;left:422px;top:928px;width:18px;height:18px;background:transparent;border:1.7px solid #a8a6a4;border-radius:4px;box-sizing:border-box"></div>
<svg style="position:absolute;left:456px;top:918.5px;" width="25" height="26" viewBox="0 0 25 26"><path d="M14 1.5 L2.5 15 H11 L7.5 24.5 L22.5 10 H13.5 L17.5 1.5 Z" fill="#f3b52f" stroke="#2a2018" stroke-width="2.2" stroke-linejoin="round"/></svg>
<div id="t65" style="position:absolute;left:490px;top:920.88px;font-size:22px;line-height:22px;font-weight:400;color:#262626;letter-spacing:0.455px;white-space:nowrap;font-family:'Liberation Sans', sans-serif;-webkit-text-stroke:0.35px #262626;">Utilities</div>
<div id="t66" style="position:absolute;right:1016px;top:918.99px;font-size:19.5px;line-height:19.5px;font-weight:400;color:#55524f;letter-spacing:0.432px;white-space:nowrap;font-family:'Liberation Sans', sans-serif;-webkit-text-stroke:0.31px #55524f;">Spent $5.00 of $30.00</div>
<div style="position:absolute;left:454px;top:949px;width:444.5px;height:6px;background:#7bb043;border-radius:3px"></div>
<div style="position:absolute;left:454px;top:949px;width:74.5px;height:6px;background:repeating-linear-gradient(128deg,#a3d97a 0 7.4px,#cdf0b0 7.4px 9.2px);border-radius:3px 0 0 3px"></div>
<div id="t67" style="position:absolute;right:868.5px;top:924.72px;font-size:21px;line-height:21px;font-weight:400;color:#262626;letter-spacing:0px;white-space:nowrap;font-family:'Liberation Sans', sans-serif;-webkit-text-stroke:0.34px #262626;">$30.00</div>
<div id="t68" style="position:absolute;right:712.5px;top:925.72px;font-size:21px;line-height:21px;font-weight:400;color:#262626;letter-spacing:0.409px;white-space:nowrap;font-family:'Liberation Sans', sans-serif;-webkit-text-stroke:0.34px #262626;">-$5.00</div>
<div style="position:absolute;left:1280.0px;top:922.8px;width:83.5px;height:30.6px;background:#a2e36b;border-radius:16px"></div>
<div id="t69" style="position:absolute;right:566px;top:927.72px;font-size:21px;line-height:21px;font-weight:400;color:#1b2a12;letter-spacing:0px;white-space:nowrap;font-family:'Liberation Sans', sans-serif;-webkit-text-stroke:0.34px #1b2a12;">$25.00</div>
<div style="position:absolute;left:366.5px;top:967.25px;width:1020.5px;height:1.5px;background:#dfdddb;"></div>
<div style="position:absolute;left:366.5px;top:968.75px;width:1020.5px;height:55.25px;background:#f6f2ef;"></div>
<svg style="position:absolute;left:388px;top:992px;" width="16" height="10" viewBox="0 0 16 10"><path d="M1.5 1.5 L8 8 L14.5 1.5" fill="none" stroke="#6b6763" stroke-width="1.8" stroke-linecap="round" stroke-linejoin="round"/></svg>
<div style="position:absolute;left:422px;top:989px;width:18px;height:18px;background:transparent;border:1.7px solid #a8a6a4;border-radius:4px;box-sizing:border-box"></div>
<div id="t70" style="position:absolute;left:455px;top:985.52px;font-size:21px;line-height:21px;font-weight:700;color:#1f1f1f;letter-spacing:0.274px;white-space:nowrap;font-family:'Liberation Sans', sans-serif;">Needs</div>
<div id="t71" style="position:absolute;right:868.5px;top:985.22px;font-size:21px;line-height:21px;font-weight:400;color:#262626;letter-spacing:0px;white-space:nowrap;font-family:'Liberation Sans', sans-serif;-webkit-text-stroke:0.34px #262626;">$370.00</div>
<div id="t72" style="position:absolute;right:712.5px;top:985.72px;font-size:21px;line-height:21px;font-weight:400;color:#262626;letter-spacing:0px;white-space:nowrap;font-family:'Liberation Sans', sans-serif;-webkit-text-stroke:0.34px #262626;">$0.00</div>
<div id="t73" style="position:absolute;right:565px;top:985.72px;font-size:21px;line-height:21px;font-weight:400;color:#262626;letter-spacing:0px;white-space:nowrap;font-family:'Liberation Sans', sans-serif;-webkit-text-stroke:0.34px #262626;">$370.00</div>
<div style="position:absolute;left:366.5px;top:1023.25px;width:1020.5px;height:1.5px;background:#dfdddb;"></div>
<div style="position:absolute;left:422px;top:1046px;width:18px;height:18px;background:transparent;border:1.7px solid #a8a6a4;border-radius:4px;box-sizing:border-box"></div>
<svg style="position:absolute;left:456px;top:1041.5px;" width="26" height="20" viewBox="0 0 26 20"><path d="M5 1 H20.5 L23 7 H2.5 Z" fill="#47c6ec" stroke="#0f2c44" stroke-width="1.8" stroke-linejoin="round"/><rect x="0.9" y="6.5" width="24.2" height="9" rx="2" fill="#3a8fd6" stroke="#0f2c44" stroke-width="1.8"/><rect x="1.8" y="14.5" width="5.5" height="5" rx="1" fill="#0f2c44"/><rect x="18.7" y="14.5" width="5.5" height="5" rx="1" fill="#0f2c44"/><rect x="4" y="10.2" width="18" height="2" fill="#9fd3f5"/></svg>
<div id="t74" style="position:absolute;left:490.5px;top:1038.88px;font-size:22px;line-height:22px;font-weight:400;color:#262626;letter-spacing:0.482px;white-space:nowrap;font-family:'Liberation Sans', sans-serif;-webkit-text-stroke:0.35px #262626;">Transportation</div>
<div style="position:absolute;left:454px;top:1067px;width:444.5px;height:6px;background:#7bb043;border-radius:3px"></div>
<div id="t75" style="position:absolute;right:868.5px;top:1042.72px;font-size:21px;line-height:21px;font-weight:400;color:#262626;letter-spacing:0px;white-space:nowrap;font-family:'Liberation Sans', sans-serif;-webkit-text-stroke:0.34px #262626;">$20.00</div>
<div id="t76" style="position:absolute;right:712.5px;top:1043.72px;font-size:21px;line-height:21px;font-weight:400;color:#55524f;letter-spacing:0px;white-space:nowrap;font-family:'Liberation Sans', sans-serif;-webkit-text-stroke:0.34px #55524f;">$0.00</div>
<div style="position:absolute;left:1280.0px;top:1040.8px;width:83.5px;height:30.6px;background:#a2e36b;border-radius:16px"></div>
<div id="t77" style="position:absolute;right:566px;top:1045.72px;font-size:21px;line-height:21px;font-weight:400;color:#1b2a12;letter-spacing:0px;white-space:nowrap;font-family:'Liberation Sans', sans-serif;-webkit-text-stroke:0.34px #1b2a12;">$20.00</div>
<svg style="position:absolute;left:1389px;top:305px;" width="14" height="10" viewBox="0 0 14 10"><path d="M1 9 L7 2 L13 9 Z" fill="#8b8b8b"/></svg>
<div style="position:absolute;left:1390.6px;top:324px;width:12.2px;height:421px;background:#8b8b8b;border-radius:6px"></div>
<svg style="position:absolute;left:1389px;top:1056px;" width="14" height="10" viewBox="0 0 14 10"><path d="M1 1 L7 8 L13 1 Z" fill="#8b8b8b"/></svg>
<div style="position:absolute;left:0px;top:1076px;width:1920px;height:4px;background:#202020;"></div>
<svg style="position:absolute;left:513px;top:384px;z-index:5" width="20" height="29" viewBox="0 0 20 29"><path d="M1.8 1.8 V24 L7 19 L10.5 27 L14 25.5 L10.6 17.6 L17.5 17.6 Z" fill="#fff" stroke="#1f1f1f" stroke-width="1.7" stroke-linejoin="round"/></svg>
<div style="position:absolute;left:1407px;top:298px;width:513px;height:778px;background:#f8f4f2;"></div>
<div style="position:absolute;left:1406.5px;top:298px;width:1.5px;height:778px;background:#e0dedc;"></div>
<div style="position:absolute;left:1429px;top:321px;width:448px;height:455px;background:#ffffff;border-radius:7px;box-shadow:0 0 3px rgba(120,100,90,0.06)"></div>
<div id="t78" style="position:absolute;left:1453px;top:348.49px;font-size:19.5px;line-height:19.5px;font-weight:700;color:#1f1f1f;letter-spacing:-0.621px;white-space:nowrap;font-family:'Liberation Sans', sans-serif;">August's Summary</div>
<svg style="position:absolute;left:1632px;top:352px;" width="18" height="12" viewBox="0 0 18 12"><path d="M1.5 1.5 L9 9.5 L16.5 1.5" fill="none" stroke="#2b2b2b" stroke-width="2" stroke-linecap="round" stroke-linejoin="round"/></svg>
<div style="position:absolute;left:1429px;top:395px;width:448px;height:1.5px;background:#eeebe7;"></div>
<div id="t79" style="position:absolute;left:1453px;top:420.29px;font-size:19.5px;line-height:19.5px;font-weight:400;color:#55524f;letter-spacing:0.339px;white-space:nowrap;font-family:'Liberation Sans', sans-serif;-webkit-text-stroke:0.31px #55524f;">Left Over from Last Month</div>
<div id="t80" style="position:absolute;right:66px;top:420.29px;font-size:19.5px;line-height:19.5px;font-weight:400;color:#55524f;letter-spacing:0.637px;white-space:nowrap;font-family:'Liberation Sans', sans-serif;-webkit-text-stroke:0.31px #55524f;">$0.00</div>
<div id="t81" style="position:absolute;left:1453px;top:455.99px;font-size:19.5px;line-height:19.5px;font-weight:400;color:#55524f;letter-spacing:0.229px;white-space:nowrap;font-family:'Liberation Sans', sans-serif;-webkit-text-stroke:0.31px #55524f;">Assigned in August</div>
<div id="t82" style="position:absolute;right:66px;top:455.99px;font-size:19.5px;line-height:19.5px;font-weight:400;color:#55524f;letter-spacing:0.748px;white-space:nowrap;font-family:'Liberation Sans', sans-serif;-webkit-text-stroke:0.31px #55524f;">$2,300.00</div>
<div id="t83" style="position:absolute;left:1453px;top:491.29px;font-size:19.5px;line-height:19.5px;font-weight:400;color:#55524f;letter-spacing:0.779px;white-space:nowrap;font-family:'Liberation Sans', sans-serif;-webkit-text-stroke:0.31px #55524f;">Activity</div>
<div id="t84" style="position:absolute;right:66px;top:491.29px;font-size:19.5px;line-height:19.5px;font-weight:400;color:#55524f;letter-spacing:1.252px;white-space:nowrap;font-family:'Liberation Sans', sans-serif;-webkit-text-stroke:0.31px #55524f;">-$780.00</div>
<div id="t85" style="position:absolute;left:1453px;top:535.69px;font-size:19.5px;line-height:19.5px;font-weight:400;color:#262626;letter-spacing:-0.309px;white-space:nowrap;font-family:'Liberation Sans', sans-serif;-webkit-text-stroke:0.31px #262626;">Available</div>
<div id="t86" style="position:absolute;right:66px;top:535.69px;font-size:19.5px;line-height:19.5px;font-weight:400;color:#262626;letter-spacing:0.748px;white-space:nowrap;font-family:'Liberation Sans', sans-serif;-webkit-text-stroke:0.31px #262626;">$1,520.00</div>
<div style="position:absolute;left:1453px;top:586px;width:402px;height:1.5px;background:#ebe8e4;"></div>
<div id="t87" style="position:absolute;left:1453px;top:616.29px;font-size:19.5px;line-height:19.5px;font-weight:400;color:#262626;letter-spacing:0.188px;white-space:nowrap;font-family:'Liberation Sans', sans-serif;-webkit-text-stroke:0.31px #262626;">Cost to Be Me</div>
<div id="t88" style="position:absolute;left:1453px;top:662.09px;font-size:19.5px;line-height:19.5px;font-weight:400;color:#55524f;letter-spacing:0.097px;white-space:nowrap;font-family:'Liberation Sans', sans-serif;-webkit-text-stroke:0.31px #55524f;">August’s Targets</div>
<div id="t89" style="position:absolute;right:66px;top:662.09px;font-size:19.5px;line-height:19.5px;font-weight:400;color:#55524f;letter-spacing:0.637px;white-space:nowrap;font-family:'Liberation Sans', sans-serif;-webkit-text-stroke:0.31px #55524f;">$0.00</div>
<div style="position:absolute;left:1453px;top:709px;width:402px;height:44.5px;background:#e4e4fb;border-radius:9px"></div>
<div id="t90" style="position:absolute;left:1510px;top:719.65px;font-size:22.5px;line-height:22.5px;font-weight:400;color:#5b5ec8;letter-spacing:0.263px;white-space:nowrap;font-family:'Liberation Sans', sans-serif;-webkit-text-stroke:0.36px #5b5ec8;">Enter your expected income</div>
<div style="position:absolute;left:1429px;top:798px;width:448px;height:76px;background:#ffffff;border-radius:7px;box-shadow:0 0 3px rgba(120,100,90,0.06)"></div>
<svg style="position:absolute;left:1453px;top:823px;" width="20" height="25" viewBox="0 0 20 25"><path d="M12 0.5 L2 14 H9 L6.5 24.5 L18 10 H11 Z" fill="#262626"/></svg>
<div id="t91" style="position:absolute;left:1487px;top:827.57px;font-size:20px;line-height:20px;font-weight:400;color:#1f1f1f;letter-spacing:0.287px;white-space:nowrap;font-family:'Liberation Sans', sans-serif;-webkit-text-stroke:0.55px #1f1f1f;">Auto-Assign</div>
<svg style="position:absolute;left:1612px;top:826px;" width="13" height="19" viewBox="0 0 13 19"><path d="M2 2 L10.5 9.5 L2 17" fill="none" stroke="#2b2b2b" stroke-width="2" stroke-linecap="round" stroke-linejoin="round"/></svg>
<div style="position:absolute;left:1429px;top:896px;width:448px;height:200px;background:#ffffff;border-radius:7px;box-shadow:0 0 3px rgba(120,100,90,0.06)"></div>
<div id="t92" style="position:absolute;left:1453px;top:922.72px;font-size:19px;line-height:19px;font-weight:700;color:#1f1f1f;letter-spacing:-0.276px;white-space:nowrap;font-family:'Liberation Sans', sans-serif;">Assigned in Future Months</div>
<svg style="position:absolute;left:1702px;top:926px;" width="19" height="12" viewBox="0 0 19 12"><path d="M1.5 1.5 L9.5 10 L17.5 1.5" fill="none" stroke="#2b2b2b" stroke-width="2" stroke-linecap="round" stroke-linejoin="round"/></svg>
<div id="t93" style="position:absolute;right:66px;top:922.99px;font-size:19.5px;line-height:19.5px;font-weight:400;color:#55524f;letter-spacing:0.637px;white-space:nowrap;font-family:'Liberation Sans', sans-serif;-webkit-text-stroke:0.31px #55524f;">$0.00</div>
<div style="position:absolute;left:1429px;top:969.5px;width:448px;height:1.5px;background:#eeebe7;"></div>
<div id="t94" style="position:absolute;left:1453px;top:996.49px;font-size:19.5px;line-height:19.5px;font-weight:400;color:#3b3835;letter-spacing:0.290px;white-space:nowrap;font-family:'Liberation Sans', sans-serif;-webkit-text-stroke:0.31px #3b3835;">September</div>
<div id="t95" style="position:absolute;right:66px;top:996.49px;font-size:19.5px;line-height:19.5px;font-weight:400;color:#55524f;letter-spacing:0.637px;white-space:nowrap;font-family:'Liberation Sans', sans-serif;-webkit-text-stroke:0.31px #55524f;">$0.00</div>
<div style="position:absolute;left:1442px;top:1040px;width:424px;height:60px;background:#f2efec;border-radius:10px"></div>
<svg style="position:absolute;left:1467px;top:1065px;" width="62" height="12" viewBox="0 0 62 12"><path d="M0 12 V9 C2 3 5 3 7 9 H9 C11 3 14 3 16 9 H18 C20 3 23 3 25 9 H27 C29 3 32 3 34 9 H36 C38 3 41 3 43 9 H45 C47 3 50 3 52 9 H54 C56 3 59 3 61 9 V12 Z" fill="#8d88d6"/><path d="M0 9 C2 3 5 3 7 9 H9 C11 3 14 3 16 9 H18 C20 3 23 3 25 9 H27 C29 3 32 3 34 9 H36 C38 3 41 3 43 9 H45 C47 3 50 3 52 9 H54 C56 3 59 3 61 9" fill="none" stroke="#4a44b8" stroke-width="1.6"/></svg>
<div id="t96" style="position:absolute;left:1554px;top:1064.26px;font-size:18px;line-height:18px;font-weight:400;color:#55524f;letter-spacing:-0.275px;white-space:nowrap;font-family:'Liberation Sans', sans-serif;-webkit-text-stroke:0.29px #55524f;">Tired of living paycheck to</div>
<div style="position:absolute;left:1801px;top:965px;width:56px;height:56px;background:#5f5b58;border-radius:50%"></div>
<div id="t97" style="position:absolute;left:1829px;transform:translateX(-50%);top:973.14px;font-size:40px;line-height:40px;font-weight:700;color:#ffffff;letter-spacing:0px;white-space:nowrap;font-family:'Liberation Sans', sans-serif;">?</div>
<svg style="position:absolute;left:1903px;top:305px;" width="14" height="10" viewBox="0 0 14 10"><path d="M1 9 L7 2 L13 9 Z" fill="#8b8b8b"/></svg>
<div style="position:absolute;left:1904px;top:323px;width:12.3px;height:582px;background:#8b8b8b;border-radius:6px"></div>
<svg style="position:absolute;left:1903px;top:1056px;" width="14" height="10" viewBox="0 0 14 10"><path d="M1 1 L7 8 L13 1 Z" fill="#8b8b8b"/></svg>
<div style="position:absolute;left:0px;top:1076px;width:1920px;height:4px;background:#202020;"></div></body></html>
